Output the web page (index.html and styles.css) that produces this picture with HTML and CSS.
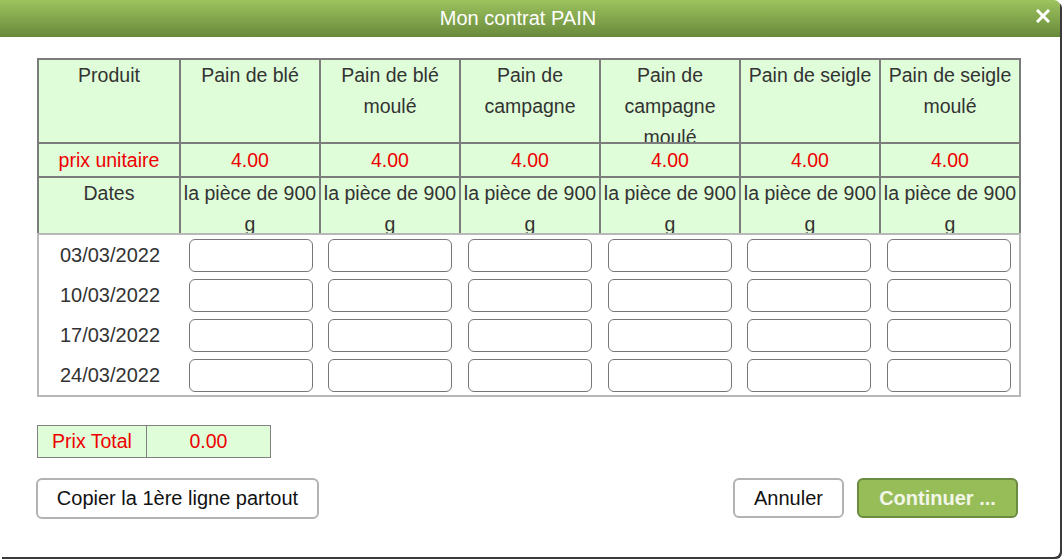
FILE: index.html
```html
<!DOCTYPE html>
<html lang="fr">
<head>
<meta charset="utf-8">
<title>Mon contrat PAIN</title>
<link rel="stylesheet" href="styles.css">
</head>
<body>
<div class="dialog">
  <div class="titlebar">
    <div class="title">Mon contrat PAIN</div>
    <div class="close" aria-label="Fermer">
      <svg width="14" height="14" viewBox="0 0 14 14"><path d="M2 2 L12 12 M12 2 L2 12" stroke="#fff" stroke-width="3" stroke-linecap="square"/></svg>
    </div>
  </div>
  <div class="content">
    <div class="head-grid">
      <div class="cell c-top">Produit</div>
      <div class="cell c-top">Pain de blé</div>
      <div class="cell c-top">Pain de blé moulé</div>
      <div class="cell c-top">Pain de campagne</div>
      <div class="cell c-top">Pain de campagne moulé</div>
      <div class="cell c-top">Pain de seigle</div>
      <div class="cell c-top">Pain de seigle moulé</div>

      <div class="cell c-price red">prix unitaire</div>
      <div class="cell c-price red">4.00</div>
      <div class="cell c-price red">4.00</div>
      <div class="cell c-price red">4.00</div>
      <div class="cell c-price red">4.00</div>
      <div class="cell c-price red">4.00</div>
      <div class="cell c-price red">4.00</div>

      <div class="cell c-unit">Dates</div>
      <div class="cell c-unit">la pièce de 900 g</div>
      <div class="cell c-unit">la pièce de 900 g</div>
      <div class="cell c-unit">la pièce de 900 g</div>
      <div class="cell c-unit">la pièce de 900 g</div>
      <div class="cell c-unit">la pièce de 900 g</div>
      <div class="cell c-unit">la pièce de 900 g</div>
    </div>
    <div class="body-grid">
      <div class="date">03/03/2022</div>
      <div class="qty"><input type="text"></div><div class="qty"><input type="text"></div><div class="qty"><input type="text"></div><div class="qty"><input type="text"></div><div class="qty"><input type="text"></div><div class="qty"><input type="text"></div>
      <div class="date">10/03/2022</div>
      <div class="qty"><input type="text"></div><div class="qty"><input type="text"></div><div class="qty"><input type="text"></div><div class="qty"><input type="text"></div><div class="qty"><input type="text"></div><div class="qty"><input type="text"></div>
      <div class="date">17/03/2022</div>
      <div class="qty"><input type="text"></div><div class="qty"><input type="text"></div><div class="qty"><input type="text"></div><div class="qty"><input type="text"></div><div class="qty"><input type="text"></div><div class="qty"><input type="text"></div>
      <div class="date">24/03/2022</div>
      <div class="qty"><input type="text"></div><div class="qty"><input type="text"></div><div class="qty"><input type="text"></div><div class="qty"><input type="text"></div><div class="qty"><input type="text"></div><div class="qty"><input type="text"></div>
    </div>
    <div class="total">
      <div class="total-label">Prix Total</div>
      <div class="total-value">0.00</div>
    </div>
    <div class="actions">
      <button class="btn btn-copy">Copier la 1ère ligne partout</button>
      <div class="right-actions">
        <button class="btn btn-cancel">Annuler</button>
        <button class="btn btn-go">Continuer ...</button>
      </div>
    </div>
  </div>
</div>
</body>
</html>
```
FILE: styles.css
```css
html, body {
  margin: 0;
  padding: 0;
  background: #ffffff;
}
body {
  font-family: "Liberation Sans", Arial, sans-serif;
  width: 1062px;
  height: 559px;
  overflow: hidden;
}
.dialog {
  width: 1060px;
  height: 557px;
  background: #fff;
  border-radius: 0 6px 6px 0;
  box-shadow: 2px 2px 0 #3a3a3a;
  overflow: hidden;
}
.titlebar {
  height: 37px;
  background: linear-gradient(#9dc35e, #68893b);
  display: flex;
  align-items: center;
  color: #fff;
}
.title {
  flex: 1;
  text-align: center;
  font-size: 20px;
}
.close {
  width: 24px;
  height: 37px;
  display: flex;
  align-items: center;
  justify-content: flex-start;
}
.close svg { display: block; margin-top: -6px; }
.content {
  padding: 21px 39px 0 37px;
}
.head-grid {
  display: grid;
  grid-template-columns: 142px repeat(6, 140px);
  grid-template-rows: 84px 34px 55px;
  width: 984px;
  box-sizing: border-box;
  border-top: 2px solid #7c7c7c;
  border-left: 2px solid #7c7c7c;
  background: #e0fdd9;
}
.cell {
  box-sizing: border-box;
  border-right: 2px solid #7c7c7c;
  border-bottom: 2px solid #7c7c7c;
  overflow: hidden;
  text-align: center;
  font-size: 19.5px;
  line-height: 31px;
  color: #333;
  padding: 0;
}
.c-price { line-height: 32px; }
.c-unit { border-bottom: none; line-height: 31px; }
.red { color: #ee0000; }
.body-grid {
  display: grid;
  grid-template-columns: 142px repeat(6, 1fr);
  grid-auto-rows: 40px;
  width: 984px;
  box-sizing: border-box;
  border: 2px solid #b8b8b8;
}
.date {
  font-size: 20px;
  color: #333;
  text-align: center;
  line-height: 40px;
}
.qty {
  display: flex;
  align-items: center;
  justify-content: center;
}
.qty input {
  box-sizing: border-box;
  width: 124px;
  height: 33px;
  border: 1px solid #767676;
  border-radius: 6px;
  background: #fff;
  margin: 0;
  padding: 0 6px;
  font: 19px "Liberation Sans", Arial, sans-serif;
}
.total {
  display: flex;
  margin-top: 28px;
  width: 234px;
  height: 33px;
  box-sizing: border-box;
  border: 1px solid #808080;
  background: #e0fdd9;
  color: #ee0000;
  font-size: 19.5px;
}
.total-label {
  width: 108px;
  border-right: 1px solid #808080;
  text-align: center;
  line-height: 31px;
}
.total-value {
  flex: 1;
  text-align: center;
  line-height: 31px;
}
.actions {
  display: flex;
  justify-content: space-between;
  margin-top: 20px;
  margin-right: 3px;
  margin-left: -1px;
}
.right-actions {
  display: flex;
  gap: 13px;
}
.btn {
  font-family: "Liberation Sans", Arial, sans-serif;
  font-size: 20px;
  border-radius: 6px;
  box-sizing: border-box;
  background: #fff;
  color: #111;
  margin: 0;
  padding: 0;
  cursor: pointer;
}
.btn-copy {
  width: 283px;
  height: 41px;
  border: 2px solid #b3b3b3;
}
.btn-cancel {
  width: 111px;
  height: 40px;
  border: 2px solid #b3b3b3;
}
.btn-go {
  width: 161px;
  height: 40px;
  border: 2px solid #6b8b40;
  background: #97bd59;
  color: #f2f6e8;
  font-weight: bold;
}
```
